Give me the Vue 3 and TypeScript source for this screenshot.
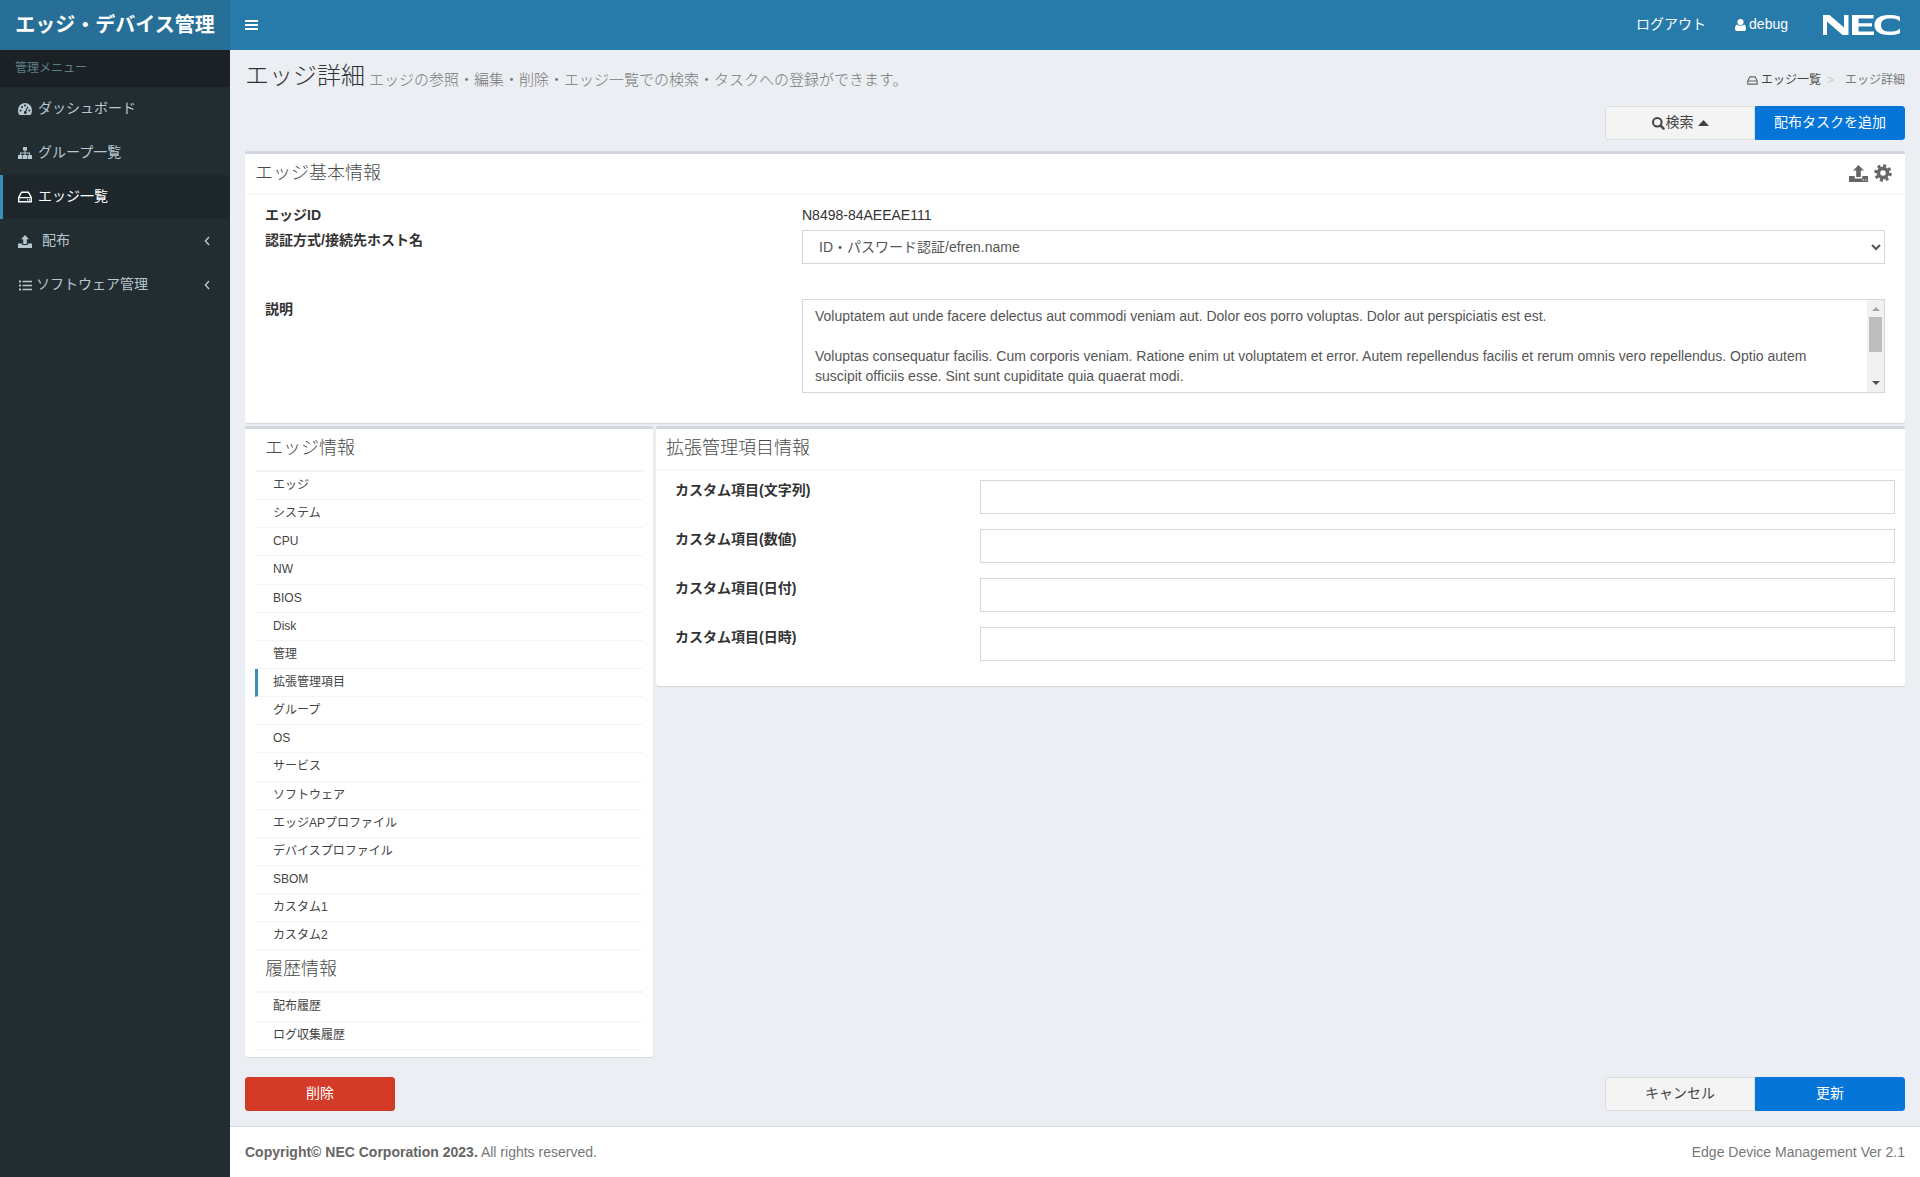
<script setup lang="ts">
interface NavItem {
  label: string
  icon: 'gauge' | 'sitemap' | 'hdd' | 'upload' | 'list'
  active?: boolean
  tree?: boolean
}

const navItems: NavItem[] = [
  { label: 'ダッシュボード', icon: 'gauge' },
  { label: 'グループ一覧', icon: 'sitemap' },
  { label: 'エッジ一覧', icon: 'hdd', active: true },
  { label: '配布', icon: 'upload', tree: true },
  { label: 'ソフトウェア管理', icon: 'list', tree: true },
]

const edgeItems = [
  'エッジ',
  'システム',
  'CPU',
  'NW',
  'BIOS',
  'Disk',
  '管理',
  '拡張管理項目',
  'グループ',
  'OS',
  'サービス',
  'ソフトウェア',
  'エッジAPプロファイル',
  'デバイスプロファイル',
  'SBOM',
  'カスタム1',
  'カスタム2',
]

const historyItems = ['配布履歴', 'ログ収集履歴']

const customFields = ['カスタム項目(文字列)', 'カスタム項目(数値)', 'カスタム項目(日付)', 'カスタム項目(日時)']

const description = `Voluptatem aut unde facere delectus aut commodi veniam aut. Dolor eos porro voluptas. Dolor aut perspiciatis est est.

Voluptas consequatur facilis. Cum corporis veniam. Ratione enim ut voluptatem et error. Autem repellendus facilis et rerum omnis vero repellendus. Optio autem suscipit officiis esse. Sint sunt cupiditate quia quaerat modi.`
</script>

<template>
  <div class="layout">
    <aside class="sidebar">
      <div class="brand">エッジ・デバイス管理</div>
      <div class="menu-label">管理メニュー</div>
      <ul class="menu">
        <li v-for="item in navItems" :key="item.label" class="menu-item" :class="{ active: item.active }">
          <span class="menu-icon" :class="`icon-${item.icon}`">
            <svg v-if="item.icon === 'gauge'" width="14" height="12" viewBox="0 0 14 12">
              <path fill="currentColor" d="M7 0a7 7 0 0 0-7 7c0 2 .5 3.6 1.3 5h11.4c.8-1.4 1.3-3 1.3-5a7 7 0 0 0-7-7z" />
              <g fill="#222d32">
                <circle cx="2.6" cy="7.4" r="1" />
                <circle cx="4" cy="4" r="1" />
                <circle cx="7" cy="2.6" r="1" />
                <circle cx="11.4" cy="7.4" r="1" />
                <path d="M9.3 3.4l1 .5-2 4.6a1.4 1.4 0 1 1-1-.4z" />
              </g>
            </svg>
            <svg v-else-if="item.icon === 'sitemap'" width="14" height="12" viewBox="0 0 14 12">
              <path fill="currentColor" d="M5 0h4v3.4H7.500v2h4.600v2.600h1.900v4H9.600V8h1.500V6.400H7.500V8H9v4H5V8h1.500V6.400H2.900V8h1.500v4H0V8h1.900V5.400h4.600v-2H5z" />
            </svg>
            <svg v-else-if="item.icon === 'hdd'" width="14" height="12" viewBox="0 0 14 12">
              <path fill="none" stroke="currentColor" stroke-width="1.4" d="M3.6 1.2h6.800l2.900 5.200v4.400H.7V6.400zM.7 6.600h12.600" />
              <path fill="currentColor" d="M9 8.200h1.200v1.200H9zM11 8.200h1.200v1.200H11z" />
            </svg>
            <svg v-else-if="item.icon === 'upload'" width="14" height="13" viewBox="0 0 14 13">
              <path fill="currentColor" d="M7 0l4 4.200H8.800V9H5.200V4.200H3zM0 8.400h4.200V10h5.600V8.400H14V13H0z" />
            </svg>
            <svg v-else width="13" height="11" viewBox="0 0 13 11">
              <path fill="currentColor" d="M0 .5h2v2H0zM3.500 .8H13v1.400H3.500zM0 4.500h2v2H0zM3.500 4.800H13v1.400H3.500zM0 8.500h2v2H0zM3.500 8.800H13v1.400H3.500z" />
            </svg>
          </span>
          <span>{{ item.label }}</span>
          <svg v-if="item.tree" class="chevron" width="6" height="10" viewBox="0 0 6 10">
            <path fill="none" stroke="currentColor" stroke-width="1.400" d="M5 1L1.400 5 5 9" />
          </svg>
        </li>
      </ul>
    </aside>

    <div class="main">
      <header class="topbar">
        <svg class="hamburger" width="13" height="10" viewBox="0 0 13 10">
          <path fill="#fff" d="M0 0h13v2H0zM0 4h13v2H0zM0 8h13v2H0z" />
        </svg>
        <span class="logout">ログアウト</span>
        <span class="user">
          <svg width="11" height="12" viewBox="0 0 11 12">
            <circle cx="5.500" cy="3.100" r="3.100" fill="#fff" />
            <path fill="#fff" d="M2 5.400c1 1 2.200 1.400 3.500 1.400S8 6.400 9 5.400c1.300.4 2 1.900 2 4.300C11 11.200 10 12 9 12H2c-1 0-2-.8-2-2.300 0-2.400.7-3.900 2-4.300z" />
          </svg>
          debug
        </span>
        <svg class="nec-logo" width="77" height="20" viewBox="0 0 77 20">
          <path fill="#fff" d="M0 20V0h6.500L21 12.500V0h4.500v20h-6L4 6.500V20z" />
          <path fill="#fff" d="M29 0h21.500v3.400H35.500v4.800H49v3.400H35.500v5h15.500V20H29z" />
          <path fill="#fff" d="M77 6.500C75 3.900 71 3.400 66.500 3.400c-5.500 0-8.500 2.300-8.500 6.600s3 6.600 8.500 6.600c4.500 0 8.500-.6 10.500-3.200v4.800C73.500 19.600 70 20 65.500 20 56.500 20 51.500 16.200 51.500 10S56.500 0 65.500 0c4.500 0 8 .4 11.500 1.800z" />
        </svg>
      </header>

      <main class="content">
        <div class="page-head">
          <h1 class="page-title">エッジ詳細<small>エッジの参照・編集・削除・エッジ一覧での検索・タスクへの登録ができます。</small></h1>
          <div class="breadcrumb">
            <svg width="11" height="9" viewBox="0 0 14 12">
              <path fill="none" stroke="#666" stroke-width="1.500" d="M3.600 1.200h6.800l2.900 5.200v4.400H.7V6.400zM.7 6.600h12.600" />
            </svg>
            <span class="crumb-link">エッジ一覧</span>
            <span class="crumb-sep">&gt;</span>
            <span class="crumb-current">エッジ詳細</span>
          </div>
        </div>

        <div class="actions">
          <div class="btn-group">
            <button class="btn btn-default">
              <svg class="search-icon" width="13" height="13" viewBox="0 0 13 13">
                <circle cx="5.300" cy="5.300" r="4.300" fill="none" stroke="#444" stroke-width="2" />
                <path stroke="#444" stroke-width="2.400" stroke-linecap="round" d="M8.600 8.600l3 3" />
              </svg>
              検索
              <svg class="caret" width="11" height="6" viewBox="0 0 11 6"><path fill="#444" d="M5.500 0L11 6H0z" /></svg>
            </button>
            <button class="btn btn-primary">配布タスクを追加</button>
          </div>
        </div>

        <section class="box">
          <div class="box-header">
            <h3 class="box-title">エッジ基本情報</h3>
            <div class="box-tools">
              <svg width="19" height="17" viewBox="0 0 19 17">
                <path fill="#666" d="M9.500 0l5.400 5.600h-3.100V12H7.200V5.600H4.100zM0 11h5.700v2.400h7.600V11H19v6H0z" />
                <path fill="#fff" d="M13.500 14.400h1.400v1.200h-1.400zM16 14.400h1.400v1.200H16z" />
              </svg>
              <svg width="18" height="18" viewBox="0 0 18 18">
                <circle cx="9" cy="9" r="4.600" fill="none" stroke="#666" stroke-width="3.600" />
                <circle cx="9" cy="9" r="7.300" fill="none" stroke="#666" stroke-width="3" stroke-dasharray="2.900 2.830" />
              </svg>
            </div>
          </div>
          <div class="info-grid">
            <label class="field-label">エッジID</label>
            <div class="field-value">N8498-84AEEAE111</div>
            <label class="field-label">認証方式/接続先ホスト名</label>
            <select class="form-control">
              <option>ID・パスワード認証/efren.name</option>
            </select>
            <label class="field-label desc-label">説明</label>
            <div class="desc-wrap">
              <textarea class="form-control desc" readonly :value="description"></textarea>
              <div class="fake-scrollbar">
                <span class="arrow arrow-up"></span>
                <span class="thumb"></span>
                <span class="arrow arrow-down"></span>
              </div>
            </div>
          </div>
        </section>

        <div class="columns">
          <section class="box side-box">
            <h3 class="list-title">エッジ情報</h3>
            <ul class="item-list">
              <li v-for="item in edgeItems" :key="item" :class="{ current: item === '拡張管理項目' }">{{ item }}</li>
            </ul>
            <h3 class="list-title">履歴情報</h3>
            <ul class="item-list">
              <li v-for="item in historyItems" :key="item">{{ item }}</li>
            </ul>
          </section>

          <section class="box detail-box">
            <div class="box-header">
              <h3 class="box-title">拡張管理項目情報</h3>
            </div>
            <div class="custom-form">
              <template v-for="field in customFields" :key="field">
                <label class="field-label">{{ field }}</label>
                <input class="form-control" type="text" />
              </template>
            </div>
          </section>
        </div>

        <div class="bottom-actions">
          <button class="btn btn-danger">削除</button>
          <div class="btn-group">
            <button class="btn btn-default">キャンセル</button>
            <button class="btn btn-primary">更新</button>
          </div>
        </div>
      </main>

      <footer class="footer">
        <span><strong>Copyright© NEC Corporation 2023.</strong> All rights reserved.</span>
        <span>Edge Device Management Ver 2.1</span>
      </footer>
    </div>
  </div>
</template>

<style>
html,
body {
  margin: 0;
  background: #ebeef3;
}
</style>

<style scoped>
.layout {
  display: flex;
  height: 1177px;
  font-family: 'Liberation Sans', 'Noto Sans CJK JP', sans-serif;
  font-size: 14px;
  line-height: 1.42857;
  color: #333;
  overflow: hidden;
}

.sidebar {
  width: 230px;
  flex: none;
  background: #222d32;
}

.brand {
  height: 50px;
  background: #286f98;
  color: #fff;
  font-size: 20px;
  font-weight: 700;
  line-height: 50px;
  text-align: center;
}

.menu-label {
  height: 37px;
  padding-left: 15px;
  background: #1a2226;
  color: #5f7f88;
  font-size: 12px;
  line-height: 37px;
}

.menu {
  margin: 0;
  padding: 0;
  list-style: none;
}

.menu-item {
  display: flex;
  align-items: center;
  height: 44px;
  padding-left: 15px;
  border-left: 3px solid transparent;
  color: #b8c7ce;
}

.menu-item.active {
  border-left-color: #3c8dbc;
  background: #1e282c;
  color: #fff;
}

.menu-icon {
  display: flex;
  align-items: center;
  width: 20px;
  flex: none;
  box-sizing: border-box;
}

.menu-icon.icon-upload {
  width: 24px;
}

.menu-icon.icon-list {
  width: 18px;
  padding-left: 1px;
}

.chevron {
  margin-left: auto;
  margin-right: 20px;
  color: #b8c7ce;
}

.main {
  flex: 1;
  min-width: 0;
  display: flex;
  flex-direction: column;
}

.topbar {
  display: flex;
  align-items: center;
  height: 50px;
  flex: none;
  padding: 0 20px 0 15px;
  background: #277bab;
  color: #fff;
}

.hamburger {
  margin-right: auto;
}

.user {
  display: flex;
  align-items: center;
  gap: 3px;
  margin-left: 29px;
}

.nec-logo {
  margin-left: 35px;
}

.content {
  flex: 1;
  display: flex;
  flex-direction: column;
  padding: 0 15px;
}

.page-head {
  display: flex;
  justify-content: space-between;
  align-items: flex-start;
  height: 56px;
}

.page-title {
  margin: 11px 0 0;
  font-size: 24px;
  font-weight: 300;
  line-height: 30px;
  color: #333;
}

.page-title small {
  margin-left: 4px;
  vertical-align: -1px;
  font-size: 15px;
  font-weight: 300;
  color: #777;
}

.breadcrumb {
  display: flex;
  align-items: center;
  gap: 3px;
  margin-top: 21px;
  font-size: 12px;
  line-height: 18px;
}

.crumb-link {
  color: #444;
}

.crumb-sep {
  margin: 0 8px 0 3px;
  color: #ccc;
}

.crumb-current {
  color: #777;
}

.actions {
  display: flex;
  justify-content: flex-end;
  margin-bottom: 11px;
}

.btn-group {
  display: flex;
}

.btn {
  display: flex;
  align-items: center;
  justify-content: center;
  width: 150px;
  height: 34px;
  padding: 0;
  border: 1px solid transparent;
  font: inherit;
  cursor: pointer;
}

.search-icon {
  margin-right: 1px;
}

.caret {
  margin-left: 4px;
}

.btn-default {
  background: #f4f4f4;
  border-color: #ddd;
  border-radius: 3px 0 0 3px;
  color: #444;
}

.btn-primary {
  background: #0575d8;
  border-color: #0575d8;
  border-radius: 0 3px 3px 0;
  color: #fff;
}

.btn-danger {
  background: #d33b28;
  border-color: #d33b28;
  border-radius: 3px;
  color: #fff;
}

.box {
  background: #fff;
  border-top: 3px solid #d2d6de;
  border-radius: 3px;
  box-shadow: 0 1px 1px rgba(0, 0, 0, 0.1);
}

.box-header {
  display: flex;
  justify-content: space-between;
  align-items: center;
  height: 38px;
  padding: 0 10px 2px;
  border-bottom: 1px solid #f4f4f4;
}

.box-title {
  margin: 0;
  font-size: 18px;
  font-weight: 300;
  line-height: 20px;
  color: #4a4a4a;
}

.box-tools {
  display: flex;
  align-items: center;
  gap: 6px;
  margin-right: 3px;
}

.info-grid {
  display: grid;
  grid-template-columns: 537px 1fr;
  grid-template-rows: 20px 34px 124px;
  row-gap: 5px;
  padding: 10px 20px 30px;
}

.info-grid .desc-label,
.desc-wrap {
  margin-top: 30px;
}

.field-label {
  font-weight: 700;
  color: #333;
  line-height: 20px;
}

.field-value {
  padding-top: 1px;
  color: #333;
}

.form-control {
  display: block;
  width: 100%;
  height: 34px;
  box-sizing: border-box;
  padding: 6px 12px;
  border: 1px solid #d2d6de;
  border-radius: 0;
  background: #fff;
  color: #555;
  font: inherit;
  outline: none;
}

.desc-wrap {
  position: relative;
  height: 94px;
}

.desc {
  height: 94px;
  padding: 7px 29px 6px 12px;
  resize: none;
  overflow: hidden;
}

.fake-scrollbar {
  position: absolute;
  top: 1px;
  right: 1px;
  bottom: 1px;
  display: flex;
  flex-direction: column;
  align-items: center;
  width: 17px;
  background: #f1f1f1;
}

.arrow {
  display: block;
  flex: none;
  width: 0;
  height: 0;
  border-left: 4px solid transparent;
  border-right: 4px solid transparent;
}

.arrow-up {
  margin: 7px 0 6px;
  border-bottom: 4px solid #a3a3a3;
}

.arrow-down {
  margin: auto 0 7px;
  border-top: 4px solid #505050;
}

.thumb {
  flex: none;
  width: 13px;
  height: 35px;
  background: #bdbdbd;
}

.columns {
  display: flex;
  align-items: flex-start;
  gap: 3px;
  margin-top: 3px;
}

.side-box {
  width: 408px;
  flex: none;
  padding: 0 10px 7px;
  box-sizing: border-box;
}

.list-title {
  margin: 0;
  padding: 9px 10px 12px;
  border-bottom: 2px solid #f4f4f4;
  font-size: 18px;
  font-weight: 300;
  line-height: 20px;
  color: #4a4a4a;
}

.item-list {
  margin: 0;
  padding: 0;
  list-style: none;
}

.item-list li {
  padding: 5px 15px;
  border-left: 3px solid transparent;
  border-bottom: 1px solid #f4f4f4;
  font-size: 12px;
  color: #444;
}

.item-list li.current {
  border-left-color: #3c8dbc;
}

.detail-box {
  flex: 1;
  min-width: 0;
}

.custom-form {
  display: grid;
  grid-template-columns: 305px 1fr;
  row-gap: 15px;
  padding: 10px 10px 25px 19px;
}

.bottom-actions {
  display: flex;
  justify-content: space-between;
  margin-top: auto;
  margin-bottom: 15px;
}

.footer {
  display: flex;
  justify-content: space-between;
  align-items: center;
  height: 51px;
  flex: none;
  box-sizing: border-box;
  padding: 2px 15px 0;
  border-top: 1px solid #d2d6de;
  background: #fff;
  color: #777;
}

.footer strong {
  color: #666;
}
</style>
